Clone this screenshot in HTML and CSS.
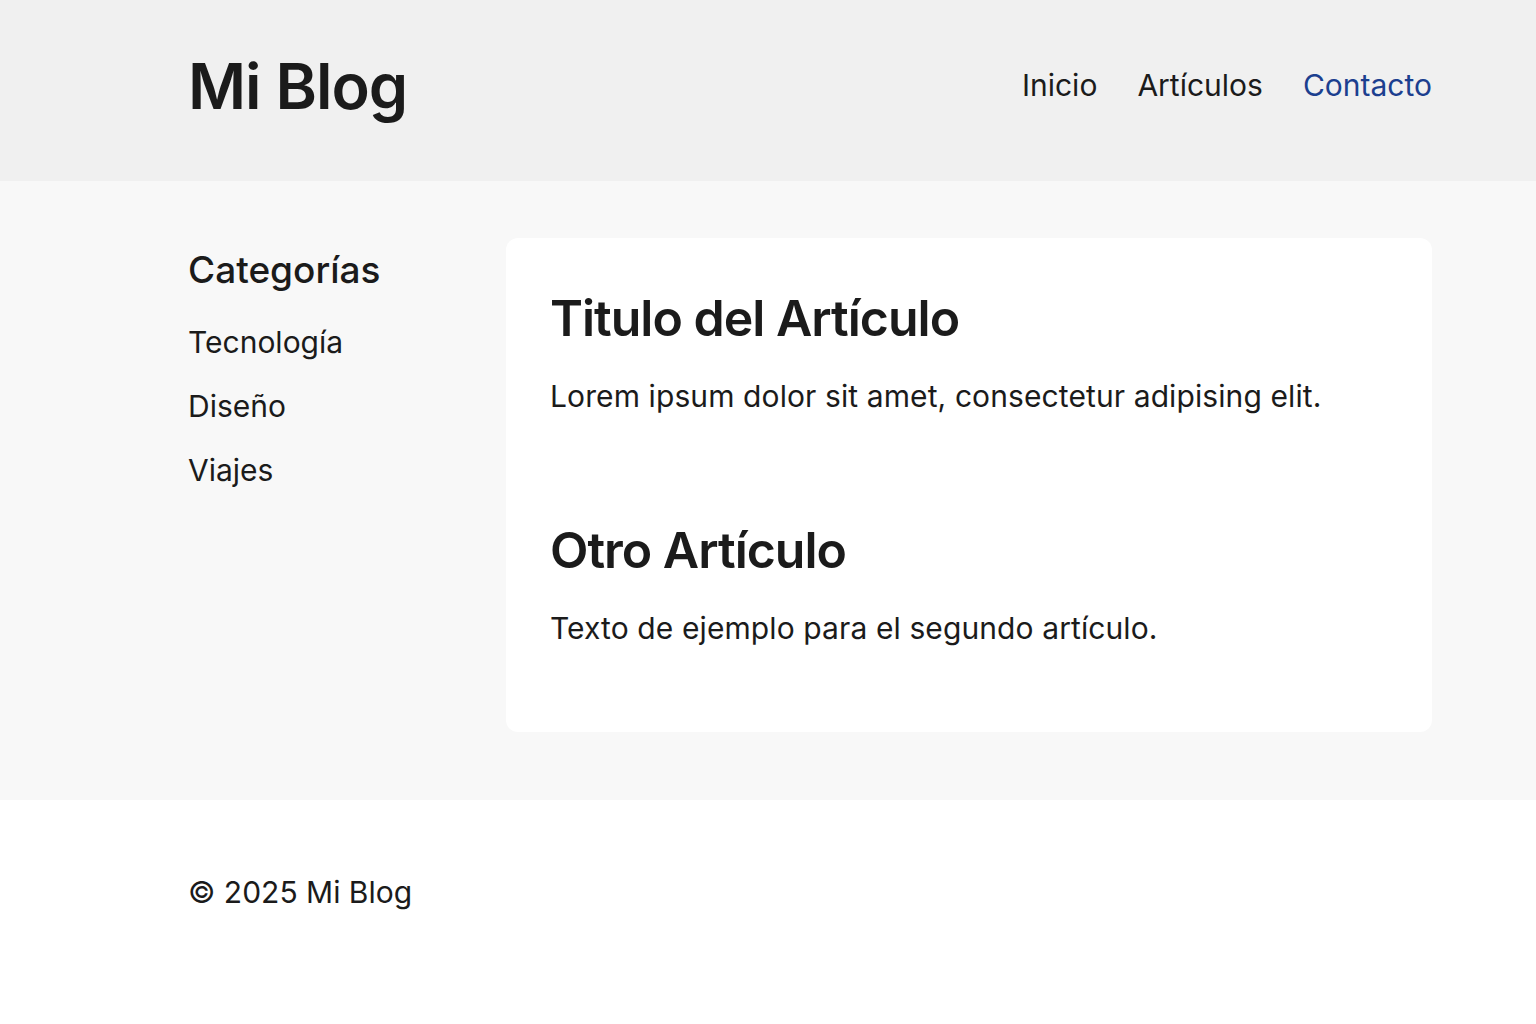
FILE: index.html
```html
<!DOCTYPE html>
<html lang="es">
<head>
<meta charset="utf-8">
<title>Mi Blog</title>
<link rel="stylesheet" href="styles.css">
</head>
<body>
<header class="site-header">
  <div class="container header-inner">
    <h1 class="logo">Mi Blog</h1>
    <nav class="nav">
      <a href="#" class="nav-link">Inicio</a>
      <a href="#" class="nav-link">Artículos</a>
      <a href="#" class="nav-link active">Contacto</a>
    </nav>
  </div>
</header>
<main class="site-main">
  <div class="container main-inner">
    <aside class="sidebar">
      <h2 class="sidebar-title">Categorías</h2>
      <ul class="cat-list">
        <li>Tecnología</li>
        <li>Diseño</li>
        <li>Viajes</li>
      </ul>
    </aside>
    <section class="card">
      <article class="post">
        <h2 class="post-title">Titulo del Artículo</h2>
        <p class="post-text">Lorem ipsum dolor sit amet, consectetur adipising elit.</p>
      </article>
      <article class="post">
        <h2 class="post-title">Otro Artículo</h2>
        <p class="post-text">Texto de ejemplo para el segundo artículo.</p>
      </article>
    </section>
  </div>
</main>
<footer class="site-footer">
  <div class="container">
    <p class="copy">© 2025 Mi Blog</p>
  </div>
</footer>
</body>
</html>
```
FILE: styles.css
```css
* { box-sizing: border-box; }
html, body { margin: 0; padding: 0; }
body {
  font-family: Inter, "Noto Sans", sans-serif;
  color: #1b1b1b;
  background: #ffffff;
}
.container {
  width: 1244px;
  margin: 0 auto 0 188px;
}
.site-header {
  background: #f0f0f0;
  height: 181px;
}
.header-inner {
  display: flex;
  align-items: center;
  justify-content: space-between;
  height: 100%;
  padding-bottom: 12px;
}
.logo {
  margin: 0;
  font-size: 63px;
  font-weight: 600;
  letter-spacing: -1px;
  color: #1b1b1b;
  line-height: 1;
  position: relative;
  top: 2px;
}
.nav {
  display: flex;
  gap: 40px;
}
.nav-link {
  font-size: 30px;
  color: #1b1b1b;
  text-decoration: none;
}
.nav-link.active { color: #1c3f8f; }
.site-main {
  background: #f8f8f8;
  height: 619px;
}
.main-inner {
  display: flex;
  padding-top: 57px;
}
.sidebar {
  width: 318px;
  flex: none;
}
.sidebar-title {
  margin: 10px 0 0;
  font-size: 37px;
  font-weight: 500;
  line-height: 1.2;
}
.cat-list {
  list-style: none;
  margin: 32px 0 0;
  padding: 0;
  display: flex;
  flex-direction: column;
  gap: 28px;
}
.cat-list li {
  font-size: 30px;
  line-height: 36px;
}
.card {
  flex: 1;
  background: #ffffff;
  border-radius: 12px;
  height: 494px;
  padding: 50px 44px;
  display: flex;
  flex-direction: column;
  gap: 106px;
}
.post-title {
  margin: 0;
  font-size: 50px;
  font-weight: 600;
  line-height: 1.2;
  letter-spacing: -1px;
}
.post-text {
  margin: 30px 0 0;
  font-size: 30px;
  line-height: 36px;
  letter-spacing: 0.1px;
}
.site-footer {
  background: #ffffff;
  height: 224px;
}
.copy {
  margin: 0;
  padding-top: 74px;
  font-size: 30px;
  line-height: 36px;
}
```
